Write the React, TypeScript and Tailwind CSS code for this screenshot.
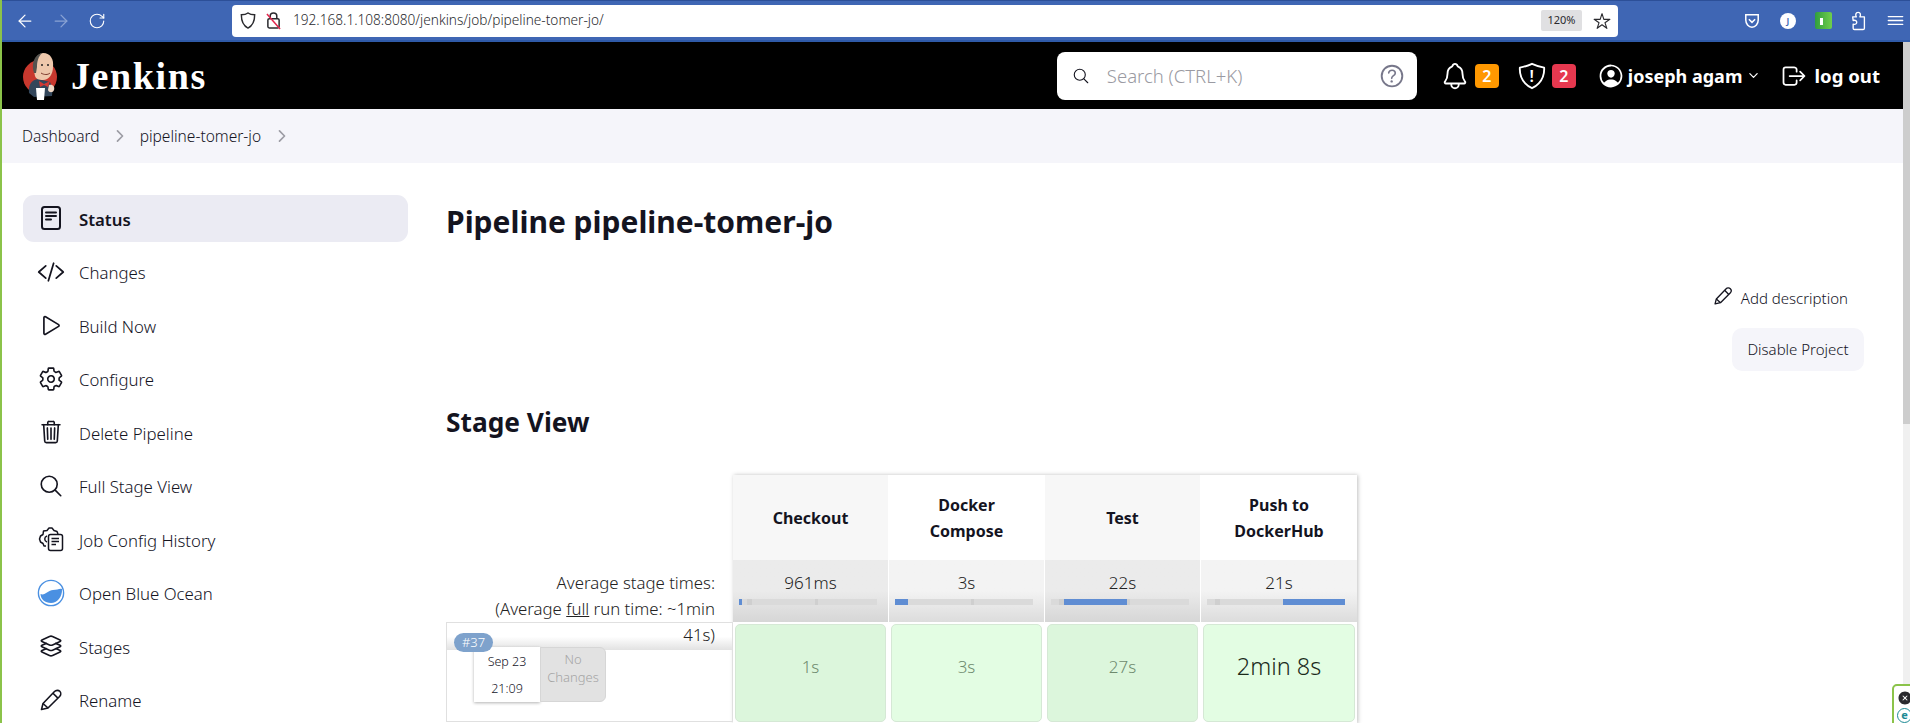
import React from "react";
import { ArrowLeft, ArrowRight, RotateCw } from "lucide-react";
import {
  IoCodeSlashOutline, IoPlayOutline, IoSettingsOutline, IoTrashOutline,
  IoSearchOutline, IoLayersOutline, IoNotificationsOutline, IoShieldOutline,
  IoPersonCircleOutline, IoLogOutOutline, IoHelpCircleOutline, IoChevronDown, IoChevronForward,
  IoStarOutline, IoMenuOutline, IoCloseCircle,
} from "react-icons/io5";

const sans = "font-['Noto_Sans','Open_Sans',sans-serif]";

function JenkinsLogo() {
  return (
    <svg viewBox="0 0 36 48" className="w-[36px] h-[48px] shrink-0">
      <circle cx="18" cy="25" r="17" fill="#c8382e" />
      <path d="M7 41 C6 32 10 28 16 27 L28 30 C30 34 31 38 30 44 L12 45 Z" fill="#33465a" />
      <path d="M13 24 C10 12 13 2 21 1 C29 1 32 8 31 15 C31 22 27 28 21 28 C17 28 14 27 13 24 Z" fill="#eec8ac" />
      <path d="M12 21 C9 12 12 3 20 1 C16 5 15 10 15 15 L14 21 Z" fill="#54534f" />
      <path d="M17 29 L22 32 L28 29 L26 35 L22 33 L18 35 Z" fill="#d33833" />
      <path d="M19 21 C22 23 26 23 28 21" stroke="#7d3a2c" strokeWidth="1" fill="none" />
      <circle cx="26" cy="13" r="1" fill="#222" />
      <circle cx="20" cy="13" r="1" fill="#222" />
      <path d="M14 36 L23 36 L22 48 L15 48 Z" fill="#fff" />
      <path d="M27 33 C31 32 33 35 32 38 C31 41 27 41 26 38 Z" fill="#f1d8c5" />
    </svg>
  );
}

function OceanIcon() {
  return (
    <svg viewBox="0 0 28 28" className="w-[28px] h-[28px]">
      <circle cx="14" cy="14" r="12.6" fill="#fff" stroke="#4a90e2" strokeWidth="1.4" />
      <path d="M3.5 15 C8 17 11 11 16 11 C20 11 23 9 25 10 C25.5 18 20 24 14 24 C8 24 3.5 20 3.5 15 Z" fill="#4a90e2" />
    </svg>
  );
}

function JobConfigIcon() {
  return (
    <svg viewBox="0 0 26 26" className="w-[26px] h-[26px]" fill="none" stroke="#14141f" strokeWidth="1.5" strokeLinejoin="round">
      <path d="M8 20 L6 20 L5 17.5 L2.5 16 L1.5 13 L2.5 10 L5 8.5 L5.5 5 L9 4.5 L11 2 L14 2 L16 4.5 L19 5.5 L20 8" />
      <rect x="10.5" y="8.5" width="14" height="16" rx="2" fill="#fff" />
      <path d="M13.5 12.5 H21 M13.5 15.5 H21 M13.5 18.5 H18" />
      <path d="M9 10 C6 11 6 15 9 16" />
    </svg>
  );
}

function StatusIcon() {
  return (
    <svg viewBox="0 0 24 26" className="w-[24px] h-[26px]" fill="none" stroke="#14141f" strokeWidth="2" strokeLinecap="round">
      <rect x="3" y="2" width="18" height="22" rx="2.5" />
      <path d="M7 7.5 H17 M7 11 H17 M7 14.5 H12" />
    </svg>
  );
}

function PencilIcon({ size }: { size: number }) {
  return (
    <svg viewBox="0 0 24 24" width={size} height={size} fill="none" stroke="#14141f" strokeWidth="1.6" strokeLinejoin="round">
      <path d="M2.5 21.5 L4 15.5 L15.5 3.5 C17 2 19.5 2 20.8 3.3 C22.2 4.7 22 7 20.6 8.5 L9 20 Z" />
      <path d="M14 5.2 L18.9 10.1" />
      <path d="M4 15.5 L9 20" />
    </svg>
  );
}

function PuzzleIcon() {
  return (
    <svg viewBox="0 0 20 22" className="w-[18px] h-[21px]" fill="none" stroke="#fff" strokeWidth="1.5" strokeLinejoin="round">
      <path d="M3 7 H7 C6 5 6 2 9 2 C12 2 12 5 11 7 H16 V19.5 C16 20.3 15.3 21 14.5 21 H5 C4 21 3.5 20.3 3.5 19.5 V15 C6 16 7.5 14.5 7.5 13 C7.5 11.5 6 10 3.5 11 Z" />
    </svg>
  );
}

const menu: [string, React.ReactNode, boolean?][] = [
  ["Status", <StatusIcon />, true],
  ["Changes", <IoCodeSlashOutline size={28} />],
  ["Build Now", <IoPlayOutline size={27} />],
  ["Configure", <IoSettingsOutline size={26} />],
  ["Delete Pipeline", <IoTrashOutline size={26} />],
  ["Full Stage View", <IoSearchOutline size={26} />],
  ["Job Config History", <JobConfigIcon />],
  ["Open Blue Ocean", <OceanIcon />],
  ["Stages", <IoLayersOutline size={26} />],
  ["Rename", <PencilIcon size={24} />],
];

const stages = [
  { name: ["Checkout"], avg: "961ms", left: 0, width: 3, val: "1s", dark: true, big: false },
  { name: ["Docker", "Compose"], avg: "3s", left: 0, width: 13, val: "3s", dark: false, big: false },
  { name: ["Test"], avg: "22s", left: 13, width: 63, val: "27s", dark: true, big: false },
  { name: ["Push to", "DockerHub"], avg: "21s", left: 76, width: 62, val: "2min 8s", dark: false, big: true },
];

function StageColumn({ s, last }: { s: (typeof stages)[number]; last: boolean }) {
  return (
    <div className={`w-[156px] flex flex-col ${last ? "" : "border-r border-white"}`}>
      <div className={`h-[85px] flex flex-col items-center justify-center text-[16px] leading-[26px] font-bold text-[#14141f] ${s.dark ? "bg-[#f7f7f7]" : "bg-white"}`}>
        {s.name.map((n) => (
          <span key={n}>{n}</span>
        ))}
      </div>
      <div className={`h-[62px] pt-[10px] flex flex-col items-center bg-gradient-to-b ${s.dark ? "from-[#ebebeb] via-[#ebebeb] to-[#d6d6d6]" : "from-[#f3f3f3] via-[#f3f3f3] to-[#dcdcdc]"}`}>
        <span className="text-[17px] leading-[26px] font-light text-[#222]">{s.avg}</span>
        <div className="relative self-start ml-[6px] w-[138px] h-[6px] mt-[3px] bg-[#dadada]">
          <div className="absolute top-0 h-full left-[8px] w-[5px] bg-[#cfcfcf]" />
          <div className="absolute top-0 h-full left-[76px] w-[3px] bg-[#cfcfcf]" />
          <div className="absolute top-0 h-full bg-[#5f8dd3]" style={{ left: s.left, width: s.width }} />
        </div>
      </div>
      <div className="h-[102px] p-[2px]">
        <div className={`h-full pb-[12px] rounded-[5px] border border-[#d5e8d5] flex items-center justify-center font-light ${s.dark ? "bg-[#dcf6dc]" : "bg-[#e3fde3]"} ${s.big ? "text-[23.5px] text-[#1b2b1b]" : "text-[17px] text-[#6e8a6e]"}`}>
          {s.val}
        </div>
      </div>
    </div>
  );
}

export default function App() {
  return (
    <div className={`h-[723px] w-[1910px] overflow-hidden flex bg-white text-[#14141f] ${sans}`}>
      <div className="w-[2px] bg-[#8bc34a] shrink-0" />
      <div className="flex-1 min-w-0 flex flex-col">
        {/* Browser toolbar */}
        <div className="h-[42px] bg-[#3f66b4] border-t border-[#2c4f98] border-b-2 border-b-[#2f5aa8] flex items-center shrink-0 text-white">
          <ArrowLeft size={20} strokeWidth={1.5} className="ml-[13px]" />
          <ArrowRight size={20} strokeWidth={1.5} className="ml-[16px] text-[#8aa3d4]" />
          <RotateCw size={18} strokeWidth={1.5} className="ml-[17px]" />
          <div className="ml-[126px] w-[1386px] h-[32px] bg-white rounded-[4px] flex items-center text-[#2a2a2e]">
            <svg viewBox="0 0 18 20" className="ml-[8px] w-[16px] h-[19px]" fill="none" stroke="#2a2a2e" strokeWidth="1.6">
              <path d="M9 1.5 C11 3 14 3.5 16.5 3.5 C16.5 11 14 16 9 18.5 C4 16 1.5 11 1.5 3.5 C4 3.5 7 3 9 1.5 Z" />
            </svg>
            <svg viewBox="0 0 16 20" className="ml-[10px] w-[15px] h-[19px]" fill="none" strokeWidth="1.6">
              <rect x="2" y="8" width="12" height="10" rx="1.5" stroke="#2a2a2e" />
              <path d="M4.5 8 V5 C4.5 1 11.5 1 11.5 5 V8" stroke="#2a2a2e" />
              <path d="M1 3 L15 19" stroke="#e2264d" />
            </svg>
            <span className="ml-[12px] text-[13.65px] font-light whitespace-nowrap">192.168.1.108:8080/jenkins/job/pipeline-tomer-jo/</span>
            <div className="ml-auto w-[41px] h-[21px] bg-[#e0e0e2] rounded-[2px] flex items-center justify-center text-[11px]">120%</div>
            <IoStarOutline size={18} className="ml-[11px] mr-[7px]" />
          </div>
          <svg viewBox="0 0 18 18" className="ml-[126px] w-[16px] h-[16px]" fill="none" stroke="#fff" strokeWidth="1.7">
            <path d="M2 2 H16 V8 C16 12 13 16 9 16 C5 16 2 12 2 8 Z" />
            <path d="M5.5 7 L9 10.5 L12.5 7" />
          </svg>
          <div className="ml-[20px] w-[16px] h-[16px] rounded-full bg-white text-[#3f66b4] text-[9px] font-semibold flex items-center justify-center">J</div>
          <div className="relative ml-[19px] w-[17px] h-[17px] rounded-[2px] bg-gradient-to-r from-[#2f9e3f] to-[#6fcf4a]">
            <div className="absolute left-[5px] top-[6px] w-[3px] h-[7px] bg-white" />
          </div>
          <div className="ml-[18px]"><PuzzleIcon /></div>
          <IoMenuOutline size={21} className="ml-[17px]" />
        </div>
        {/* Page */}
        <div className="flex-1 min-h-0 flex">
          <div className="flex-1 min-w-0 flex flex-col">
            <header className="h-[67px] bg-black text-white flex items-center shrink-0">
              <div className="ml-[20px]"><JenkinsLogo /></div>
              <span className="ml-[13px] font-['Liberation_Serif'] font-bold text-[38px] tracking-[1.6px] leading-none">Jenkins</span>
              <div className="ml-auto w-[360px] h-[48px] bg-white rounded-[8px] flex items-center text-[#14141f]">
                <IoSearchOutline size={18} className="ml-[15px]" />
                <span className="ml-[17px] text-[18.5px] font-light text-[#9a9aa2]">Search (CTRL+K)</span>
                <IoHelpCircleOutline size={30} className="ml-auto mr-[10px] text-[#77778a]" />
              </div>
              <IoNotificationsOutline size={30} className="ml-[23px]" />
              <div className="ml-[5px] w-[24px] h-[24px] rounded-[4px] bg-[#ff9800] flex items-center justify-center text-[16px] font-semibold">2</div>
              <div className="ml-[18px] relative flex items-center justify-center">
                <IoShieldOutline size={30} />
                <span className="absolute text-[16px] font-semibold">!</span>
              </div>
              <div className="ml-[5px] w-[24px] h-[24px] rounded-[4px] bg-[#e6384f] flex items-center justify-center text-[16px] font-semibold">2</div>
              <IoPersonCircleOutline size={28} className="ml-[21px]" />
              <span className="ml-[3px] pt-[1px] text-[18px] font-bold whitespace-nowrap">joseph agam</span>
              <IoChevronDown size={13} className="ml-[5px]" />
              <IoLogOutOutline size={28} className="ml-[20px]" />
              <span className="ml-[6px] mr-[23px] pt-[1px] text-[18.6px] font-bold whitespace-nowrap">log out</span>
            </header>
            <nav className="h-[54px] bg-[#f5f5fa] flex items-center text-[15.5px] font-light shrink-0">
              <span className="ml-[20px] pt-[1px]">Dashboard</span>
              <IoChevronForward size={18} className="ml-[11px] text-[#9c9ca4]" />
              <span className="ml-[11px] pt-[1px]">pipeline-tomer-jo</span>
              <IoChevronForward size={18} className="ml-[12px] text-[#9c9ca4]" />
            </nav>
            <div className="flex-1 min-h-0 flex">
              <aside className="w-[444px] shrink-0 pl-[21px] pt-[32px] flex flex-col gap-[6.8px]">
                {menu.map(([label, icon, active]) => (
                  <div key={label} className={`w-[385px] h-[47px] rounded-[11px] flex items-center ${active ? "bg-[#ebebf3] font-semibold" : "font-light"} text-[16.8px]`}>
                    <div className="w-[56px] flex justify-center shrink-0 text-[#14141f]">{icon}</div>
                    <span className="pt-[2px]">{label}</span>
                  </div>
                ))}
              </aside>
              <main className="flex-1 min-w-0">
                <h1 className="mt-[40px] text-[30px] leading-[38px] font-bold">Pipeline pipeline-tomer-jo</h1>
                <div className="mt-[44px] flex flex-col items-end pr-[39px]">
                  <div className="flex items-center pr-[16px] text-[15px] font-light leading-[26px]">
                    <span className="mr-[8px] -mt-[4px]"><PencilIcon size={20} /></span>
                    <span>Add description</span>
                  </div>
                  <div className="mt-[17px] w-[132px] h-[43px] rounded-[10px] bg-[#f5f5fa] flex items-center justify-center text-[15px] font-light">Disable Project</div>
                </div>
                <h2 className="mt-[34px] text-[26.3px] leading-[34px] font-bold">Stage View</h2>
                <div className="mt-[36px] flex">
                  <div className="w-[287px] shrink-0 flex flex-col">
                    <div className="h-[85px]" />
                    <div className="relative z-10 h-[62px] pt-[10px] pr-[18px] text-right text-[16.8px] leading-[26px] font-light text-[#222]">
                      Average stage times:
                      <br />
                      (Average <span className="underline">full</span> run time: ~1min
                      <br />
                      41s)
                    </div>
                    <div className="relative h-[100px] border border-[#e0e0e0]">
                      <div className="h-[27px] bg-gradient-to-b from-white via-white to-[#e2e2e2]" />
                      <div className="absolute left-[7px] top-[10px] z-10 w-[39px] h-[19px] rounded-full bg-[#7ea2cc] text-white text-[13px] font-light leading-[19px] text-center">#37</div>
                      <div className="absolute left-[27px] top-[24px] flex h-[55px]">
                        <div className="w-[66px] bg-white shadow-[0_1px_3px_rgba(0,0,0,0.3)] flex flex-col items-center justify-center text-[12.5px] leading-[27px] font-light">
                          <span>Sep 23</span>
                          <span>21:09</span>
                        </div>
                        <div className="w-[66px] pb-[14px] bg-[#e2e2e2] border border-[#d6d6d6] rounded-r-[6px] flex flex-col items-center justify-center text-[13px] leading-[18px] font-light text-[#a5a5a5]">
                          <span>No</span>
                          <span>Changes</span>
                        </div>
                      </div>
                    </div>
                  </div>
                  <div className="flex shadow-[1px_0_4px_rgba(0,0,0,0.25)]">
                    {stages.map((s, i) => (
                      <StageColumn key={i} s={s} last={i === 3} />
                    ))}
                  </div>
                </div>
              </main>
            </div>
          </div>
          <div className="w-[7px] shrink-0 bg-[#f0f0f0] flex flex-col">
            <div className="h-[382px] bg-[#cdcdcd]" />
          </div>
        </div>
      </div>
      {/* Floating extension widget */}
      <div className="fixed left-[1892px] top-[684px] w-[30px] h-[50px] bg-white border-2 border-[#8bc34a] rounded-[5px] pl-[3px] pt-[4px]">
        <IoCloseCircle size={16} className="text-[#2a2a2e]" />
        <div className="mt-[2px] w-[15px] h-[15px] rounded-full border border-[#1c8a94] text-[#1c8a94] text-[11px] font-bold leading-[12px] text-center">e</div>
      </div>
    </div>
  );
}
